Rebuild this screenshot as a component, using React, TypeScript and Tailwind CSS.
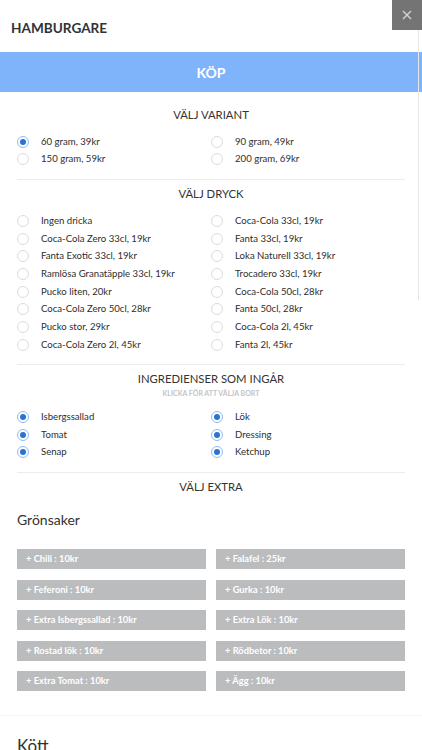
import React from "react";

const variants = [
  { label: "60 gram, 39kr", checked: true },
  { label: "90 gram, 49kr" },
  { label: "150 gram, 59kr" },
  { label: "200 gram, 69kr" },
];

const drinks = [
  "Ingen dricka",
  "Coca-Cola 33cl, 19kr",
  "Coca-Cola Zero 33cl, 19kr",
  "Fanta 33cl, 19kr",
  "Fanta Exotic 33cl, 19kr",
  "Loka Naturell 33cl, 19kr",
  "Ramlösa Granatäpple 33cl, 19kr",
  "Trocadero 33cl, 19kr",
  "Pucko liten, 20kr",
  "Coca-Cola 50cl, 28kr",
  "Coca-Cola Zero 50cl, 28kr",
  "Fanta 50cl, 28kr",
  "Pucko stor, 29kr",
  "Coca-Cola 2l, 45kr",
  "Coca-Cola Zero 2l, 45kr",
  "Fanta 2l, 45kr",
];

const ingredients = ["Isbergssallad", "Lök", "Tomat", "Dressing", "Senap", "Ketchup"];

const extras = [
  "+ Chili : 10kr",
  "+ Falafel : 25kr",
  "+ Feferoni : 10kr",
  "+ Gurka : 10kr",
  "+ Extra Isbergssallad : 10kr",
  "+ Extra Lök : 10kr",
  "+ Rostad lök : 10kr",
  "+ Rödbetor : 10kr",
  "+ Extra Tomat : 10kr",
  "+ Ägg : 10kr",
];

function Radio({ label, checked = false, rowClass }: { label: string; checked?: boolean; rowClass: string }) {
  return (
    <div className={`flex items-center ${rowClass}`}>
      <span
        className={`flex h-[12px] w-[12px] shrink-0 items-center justify-center rounded-full border ${
          checked ? "border-[#8dbcf7] bg-white" : "border-[#dcdcdc] bg-white"
        }`}
      >
        {checked && <span className="h-[6px] w-[6px] rounded-full bg-[#2b73d0]" />}
      </span>
      <span className="ml-[12px] text-[9.6px] leading-none text-[#2e2e2e]">{label}</span>
    </div>
  );
}

function Heading({ children, className = "" }: { children: React.ReactNode; className?: string }) {
  return (
    <h3 className={`pt-[2px] text-center text-[11.3px] leading-[16px] font-normal text-[#333] ${className}`}>{children}</h3>
  );
}

export default function App() {
  return (
    <div className="relative w-[422px] overflow-hidden bg-white" style={{ fontFamily: "Lato, 'Open Sans', sans-serif" }}>
      <div className="flex h-[52px] items-center px-[11px] pt-[4px]">
        <h1 className="text-[13.6px] font-bold text-[#2f3337]">HAMBURGARE</h1>
      </div>
      <button className="absolute right-0 top-0 flex h-[30px] w-[30px] items-center justify-center bg-[#747474]">
        <svg width="10" height="10" viewBox="0 0 10 10" fill="none" stroke="#d4d4d4" strokeWidth="1.4">
          <path d="M1 1L9 9M9 1L1 9" />
        </svg>
      </button>
      <div className="pointer-events-none absolute right-[3px] top-[30px] h-[270px] w-px bg-[#e6e6e6]" />

      <div className="flex h-[40px] items-center justify-center bg-[#80b4fa] text-[14px] font-bold text-white">
        KÖP
      </div>

      <div className="px-[17px]">
        <Heading className="mt-[13px]">VÄLJ VARIANT</Heading>
        <div className="mt-[10px] grid grid-cols-2">
          {variants.map((v) => (
            <Radio key={v.label} label={v.label} checked={v.checked} rowClass="h-[17.5px]" />
          ))}
        </div>
        <div className="mt-[11px] h-px bg-[#ececec]" />

        <Heading className="mt-[4px]">VÄLJ DRYCK</Heading>
        <div className="mt-[10px] grid grid-cols-2">
          {drinks.map((d) => (
            <Radio key={d} label={d} rowClass="h-[17.7px]" />
          ))}
        </div>
        <div className="mt-[10px] h-px bg-[#ececec]" />

        <Heading className="mt-[4px]">INGREDIENSER SOM INGÅR</Heading>
        <p className="mt-px text-center text-[7px] leading-[10px] font-bold text-[#c4c4c4]">KLICKA FÖR ATT VÄLJA BORT</p>
        <div className="mt-[11px] grid grid-cols-2">
          {ingredients.map((i) => (
            <Radio key={i} label={i} checked rowClass="h-[17.5px]" />
          ))}
        </div>
        <div className="mt-[11px] h-px bg-[#ececec]" />

        <Heading className="mt-[4px]">VÄLJ EXTRA</Heading>

        <h4 className="mt-[15px] text-[14px] leading-[20px] text-[#333]">Grönsaker</h4>
        <div className="mt-[19px] grid grid-cols-2 gap-x-[10px] gap-y-[10.5px]">
          {extras.map((e) => (
            <button
              key={e}
              className="flex h-[20px] items-center bg-[#bbbcbe] pl-[9px] text-left text-[9.3px] font-bold text-white"
            >
              {e}
            </button>
          ))}
        </div>
      </div>

      <div className="mt-[24px] h-px bg-[#f6f6f6]" />
      <div className="px-[17px] pt-[20px] pb-[20px]">
        <h4 className="text-[17px] leading-[20px] text-[#333]">Kött</h4>
      </div>
    </div>
  );
}
